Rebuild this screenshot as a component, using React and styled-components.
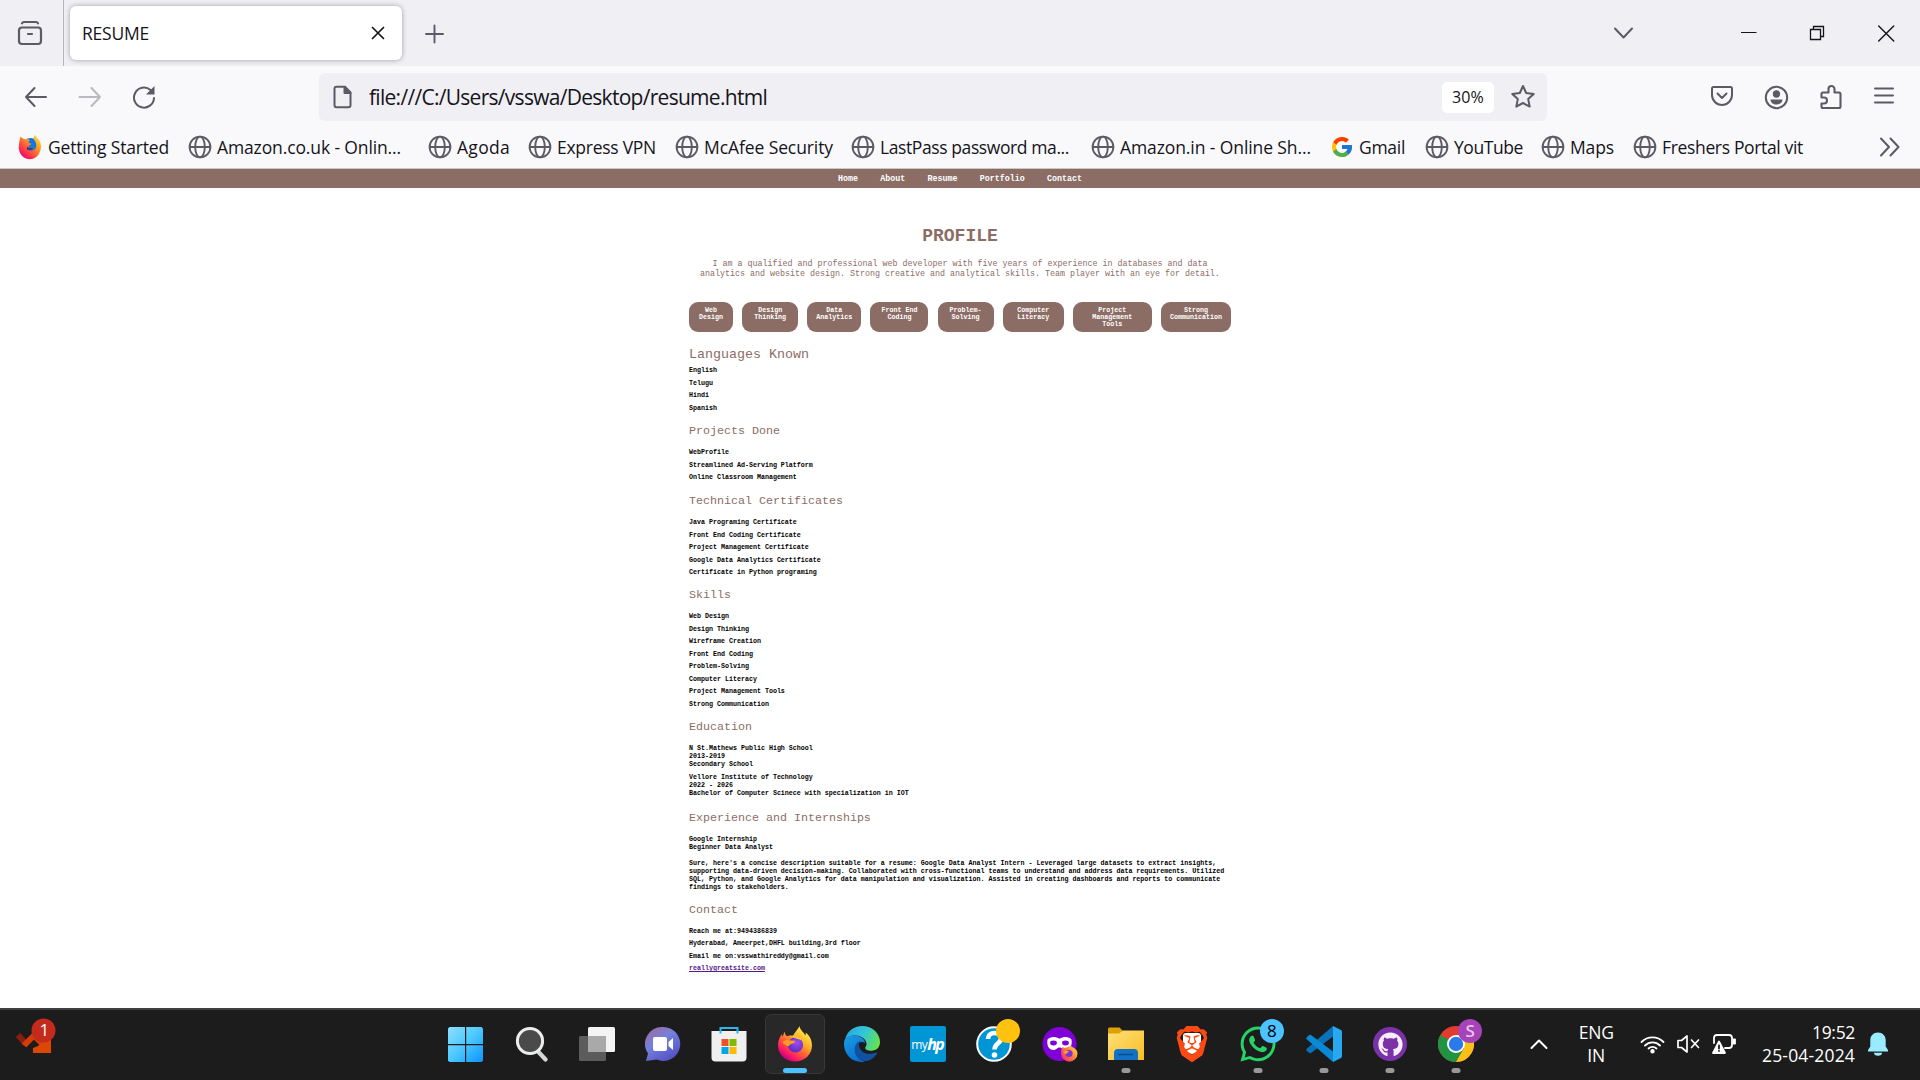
import React, { useLayoutEffect, useRef } from "react";
import styled, { createGlobalStyle } from "styled-components";
import { FaGithub, FaWhatsapp } from "react-icons/fa";
import { SiBrave } from "react-icons/si";
import { FcGoogle } from "react-icons/fc";

const UI = `"Open Sans", "Noto Sans", sans-serif`;
const MONO = `"Courier New", "Liberation Mono", monospace`;
const BROWN = "#8b6d66";
const GREY = "#5b5b66";

const Global = createGlobalStyle`
  * { box-sizing: border-box; }
  body { margin: 0; background: #fff; overflow: hidden; }
  svg { display: block; flex: none; }
`;

const Screen = styled.div`
  width: 1920px;
  height: 1080px;
  display: flex;
  flex-direction: column;
  background: #fff;
  font-family: ${UI};
  overflow: hidden;
`;

/* ---------- text that keeps a given measure ---------- */
const Measure = styled.span`
  display: block;
  flex: none;
  width: ${(p) => p.$w}px;
  font-size: ${(p) => p.$size}px;
  line-height: 1.3;
  color: ${(p) => p.$color || "#15141a"};
  white-space: pre;
`;

function Fit({ w, size, color, children }) {
  const ref = useRef(null);
  useLayoutEffect(() => {
    const el = ref.current;
    el.style.letterSpacing = "0px";
    const natural = el.getBoundingClientRect().width;
    el.style.letterSpacing = `${(w - natural) / children.length}px`;
  }, [w, size, children]);
  return (
    <Measure $w={w} $size={size} $color={color}>
      <span ref={ref}>{children}</span>
    </Measure>
  );
}

/* ---------- browser chrome ---------- */
const TabStrip = styled.div`
  height: 66px;
  flex: none;
  display: flex;
  align-items: center;
  background: #f0eff4;
`;
const FirefoxView = styled.div`
  width: 64px;
  height: 66px;
  display: flex;
  align-items: center;
  padding-left: 17px;
  border-right: 1px solid #b5b4ba;
`;
const Tab = styled.div`
  width: 332px;
  height: 54px;
  margin-left: 6px;
  padding: 0 17px 0 12px;
  display: flex;
  align-items: center;
  justify-content: space-between;
  background: #fff;
  border-radius: 6px;
  box-shadow: 0 0 5px rgba(0, 0, 0, 0.35);
`;
const NewTab = styled.div`
  margin-left: 22px;
  padding-top: 1px;
`;
const WindowControls = styled.div`
  margin-left: auto;
  padding-right: 24px;
  display: flex;
  align-items: center;
`;
const Control = styled.div`
  width: 20px;
  margin-left: ${(p) => p.$gap}px;
  display: flex;
  justify-content: center;
`;

const Toolbar = styled.div`
  height: 62px;
  flex: none;
  display: flex;
  align-items: center;
  background: #f9f9fb;
  padding: 0 25px 0 23px;
`;
const NavButtons = styled.div`
  width: 296px;
  display: flex;
  gap: 28px;
`;
const UrlBar = styled.div`
  width: 1228px;
  height: 48px;
  display: flex;
  align-items: center;
  background: #f0eff4;
  border-radius: 6px;
  padding: 0 11px 0 12px;
  gap: 16px;
`;
const UrlText = styled.div`
  padding-top: 2px;
`;
const ZoomLevel = styled.div`
  width: 52px;
  height: 31px;
  margin-left: auto;
  display: flex;
  align-items: center;
  justify-content: center;
  background: #fff;
  border-radius: 5px;
`;
const ToolIcons = styled.div`
  margin-left: auto;
  display: flex;
  align-items: center;
  gap: 30px;
`;

const Bookmarks = styled.div`
  height: 41px;
  flex: none;
  display: flex;
  align-items: center;
  background: #f9f9fb;
  padding: 0 19px 2px 18px;
  border-bottom: 1px solid #c5c9c8;
`;
const Bookmark = styled.div`
  width: ${(p) => p.$w}px;
  flex: none;
  display: flex;
  align-items: center;
  gap: ${(p) => (p.$wide ? 6 : 5)}px;
`;
const More = styled.div`
  margin-left: auto;
`;

/* ---------- page ---------- */
const Page = styled.main`
  flex: 1;
  min-height: 0;
  font-family: ${MONO};
  color: #000;
`;
const SiteNav = styled.nav`
  height: 19px;
  display: flex;
  justify-content: center;
  gap: 22.3px;
  padding-top: 2px;
  background: ${BROWN};
  color: #fff;
  font-weight: 700;
  font-size: 8.333px;
  line-height: 17px;
`;
const Sheet = styled.div`
  width: 542px;
  margin: 0 auto;
  padding-top: 38px;
`;
const Title = styled.h1`
  margin: 0;
  height: 20px;
  text-align: center;
  color: ${BROWN};
  font-size: 18px;
  line-height: 20px;
`;
const Intro = styled.p`
  margin: 13px 0 23px;
  text-align: center;
  color: ${BROWN};
  font-size: 8.333px;
  line-height: 10px;
  white-space: pre;
`;
const Pills = styled.div`
  display: flex;
  justify-content: space-between;
  height: 30px;
`;
const Pill = styled.div`
  width: ${(p) => p.$w}px;
  padding-top: 5px;
  border-radius: 9px;
  background: ${BROWN};
  color: #fff;
  font-weight: 700;
  font-size: 6.667px;
  line-height: 7.1px;
  text-align: center;
  white-space: pre;
`;
const Section = styled.section`
  margin-top: ${(p) => p.$top}px;
`;
const Heading = styled.h2`
  margin: 0 0 ${(p) => (p.$large ? 4 : 10)}px;
  color: ${BROWN};
  font-weight: 400;
  font-size: ${(p) => (p.$large ? 13.333 : 11.667)}px;
  line-height: 14px;
`;
const Item = styled.p`
  margin: 0 0 ${(p) => p.$after ?? 4.5}px;
  font-weight: 700;
  font-size: 6.667px;
  line-height: 8px;
  white-space: pre;
  &:last-child {
    margin-bottom: 0;
  }
`;
const Link = styled.a`
  color: #551a8b;
  text-decoration: underline;
`;

/* ---------- taskbar ---------- */
const Taskbar = styled.footer`
  height: 72px;
  flex: none;
  display: flex;
  border-top: 2px solid #3f3f3f;
  background: #1c1c1c;
  color: #fff;
`;
const Widgets = styled.div`
  width: 432px;
  padding: 7px 0 0 15px;
`;
const Apps = styled.div`
  display: flex;
`;
const AppSlot = styled.div`
  width: 66.08px;
  display: flex;
  justify-content: center;
  padding-top: 4px;
`;
const Tile = styled.div`
  position: relative;
  width: 60px;
  height: 60px;
  display: flex;
  align-items: center;
  justify-content: center;
  border-radius: 6px;
  border: 1px solid ${(p) => (p.$active ? "#373737" : "transparent")};
  background: ${(p) => (p.$active ? "#282828" : "transparent")};
`;
const Running = styled.span`
  position: absolute;
  bottom: 0;
  left: 50%;
  transform: translateX(-50%);
  width: ${(p) => (p.$active ? 24 : 9)}px;
  height: 5px;
  border-radius: 3px;
  background: ${(p) => (p.$active ? "#4cc2ff" : "#989898")};
`;
const Badge = styled.span`
  position: absolute;
  top: 4px;
  left: 31px;
  width: 24px;
  height: 24px;
  border-radius: 50%;
  display: flex;
  align-items: center;
  justify-content: center;
  font-size: 17px;
  font-weight: ${(p) => p.$weight || 400};
  line-height: 24px;
  background: ${(p) => p.$bg};
  color: ${(p) => p.$fg};
`;
const Round = styled.div`
  width: 34px;
  height: 34px;
  border-radius: 50%;
  display: flex;
  align-items: center;
  justify-content: center;
  background: ${(p) => p.$bg};
`;
const MyHp = styled.div`
  width: 36px;
  height: 36px;
  border-radius: 2px;
  background: #0096d6;
  display: flex;
  align-items: center;
  justify-content: center;
  font-size: 12px;
  letter-spacing: -0.5px;
  i {
    font-weight: 700;
    font-size: 16px;
    letter-spacing: -1.8px;
    padding-right: 1px;
  }
`;
const BraveMark = styled.div`
  position: relative;
  width: 36px;
  height: 36px;
  &::before {
    content: "";
    position: absolute;
    inset: 7px 9px 8px;
    background: #fff;
    border-radius: 3px 3px 9px 9px;
  }
  svg {
    position: relative;
  }
`;
const Tray = styled.div`
  flex: 1;
  display: flex;
  align-items: center;
  padding: 0 32px 2px 41px;
`;
const Lang = styled.div`
  width: 62px;
  margin-left: 17px;
  display: flex;
  flex-direction: column;
  align-items: center;
`;
const Status = styled.div`
  display: flex;
  align-items: center;
  gap: 10.5px;
  margin-left: 13px;
`;
const Clock = styled.div`
  margin-left: auto;
  display: flex;
  flex-direction: column;
  align-items: flex-end;
  margin-right: 13px;
`;

/* ---------- icons ---------- */
const Line = ({ w, h, vb, c = GREY, sw = 2, children }) => (
  <svg width={w} height={h} viewBox={vb || `0 0 ${w} ${h}`} fill="none" stroke={c} strokeWidth={sw} strokeLinecap="round" strokeLinejoin="round">
    {children}
  </svg>
);
const Globe = () => (
  <Line w={24} h={24} sw={1.9}>
    <circle cx="12" cy="12" r="10.4" />
    <ellipse cx="12" cy="12" rx="4.8" ry="10.4" />
    <path d="M2 12h20" />
  </Line>
);
const OldFirefox = () => (
  <svg width="24" height="26" viewBox="0 0 24 26">
    <defs>
      <linearGradient id="of" x1="1" y1="0" x2=".2" y2="1">
        <stop offset="0" stopColor="#fff44f" /><stop offset=".4" stopColor="#ff9a1e" /><stop offset=".8" stopColor="#ff2b4b" /><stop offset="1" stopColor="#e4007f" />
      </linearGradient>
    </defs>
    <circle cx="12.5" cy="12.5" r="8.5" fill="#0a78e8" />
    <path d="M2.500 2.500C4 4 5 5 7.500 5.200c2-.5 3.500.2 4.500.8-1 .7-1.500 1.500-1.300 2.500 1 .8 2.500.5 2.600 1.500-.3 1.200-2.600 1.500-2.900 2.700 2 2 4.600.4 5.800 1.100-1 1.500-2.700 2.600-5 2.700 3 1.200 6.500-.5 7-4 .4-3-.7-5.500-2.700-7.500C15.500 3.500 16 2 17.500.7 18 3.500 20 4.500 21.500 6.500c1 1.700 1.800 4 1.600 6.500C22.500 20 18 25.300 12 25.300 5.500 25.300.8 20 .8 13.500.8 9 1.800 6 2.500 2.500z" fill="url(#of)" />
    <path d="M9.500 12.800c2 2 5 .6 6.300 1-1.200 2-3.800 2.800-5.800 2.300-1.500-.5-1.500-2.200-.5-3.300z" fill="#213c9a" />
  </svg>
);
const FirefoxLogo = ({ s = 36 }) => (
  <svg width={s} height={s} viewBox="0 0 36 36">
    <defs>
      <linearGradient id="ff1" x1=".85" y1=".1" x2=".25" y2=".95">
        <stop offset="0" stopColor="#fff44f" /><stop offset=".35" stopColor="#ffb02a" /><stop offset=".62" stopColor="#ff5b36" /><stop offset=".85" stopColor="#f8176a" /><stop offset="1" stopColor="#c60084" />
      </linearGradient>
      <radialGradient id="ff2" cx=".6" cy=".35" r=".7">
        <stop offset="0" stopColor="#a04bef" /><stop offset="1" stopColor="#5a2bbf" />
      </radialGradient>
    </defs>
    <path d="M22.500 0c.5 4 4 6 6 9.500.3-1 .4-2 .2-3C32.500 9.500 35 14 35 19.500 35 28.500 27.500 35.500 18 35.500S1 28.500 1 19.500C1 14 3 10.500 5 8l.5 3L7.500 5.500c.3 2 1.200 3.500 2.500 4.700 2.500-1.200 4.500-.6 6-.1C17.500 6 20 5 22.500 0z" fill="url(#ff1)" />
    <circle cx="18.500" cy="18.800" r="7.600" fill="url(#ff2)" />
    <path d="M5.500 16c2.500-2.300 5.500-2.500 8-1.500l4.500.3c.8 1.500-1 2.700-3.800 3.200-1.600.4-2 2-2.800 2.200C8.500 19 6 18.500 5.500 16z" fill="#ff9a23" />
    <path d="M12.500 10c5-1.500 12 0 14.500 6-2-2-4-2.800-6-2.700-2.500-1.500-5-1.300-8.500-3.300z" fill="#ffc02c" />
  </svg>
);
const WindowsLogo = () => (
  <svg width="35" height="35" viewBox="0 0 35 35">
    <defs>
      <linearGradient id="wn" gradientUnits="userSpaceOnUse" x1="0" y1="0" x2="35" y2="35">
        <stop offset="0" stopColor="#8be0ff" /><stop offset=".5" stopColor="#4cc8ff" /><stop offset="1" stopColor="#0a93fb" />
      </linearGradient>
    </defs>
    <g fill="url(#wn)">
      <path d="M1.500 0H17v17H0V1.500z" /><path d="M18.200 0h15.300L35 1.500V17H18.200z" />
      <path d="M0 18.200h17V35H1.500L0 33.500z" /><path d="M18.200 18.200H35v15.300L33.500 35H18.200z" />
    </g>
  </svg>
);
const SearchIcon = () => (
  <svg width="34" height="36" viewBox="-1 0 34 36">
    <path d="M23.500 26l7 7.500" stroke="#d5d7da" strokeWidth="4.200" strokeLinecap="round" />
    <circle cx="15" cy="15" r="12.600" fill="#4a4a4b" stroke="#eceded" strokeWidth="3" />
  </svg>
);
const TaskView = () => (
  <svg width="36" height="36" viewBox="0 0 36 36">
    <rect x="9" y="1" width="27" height="25" rx="1.500" fill="#f4f4f4" />
    <rect x="0" y="10" width="27" height="25" rx="1.500" fill="#5c5c5c" />
    <path d="M9 10h18v16H9z" fill="#a9a9a9" />
  </svg>
);
const Chat = () => (
  <svg width="36" height="36" viewBox="0 0 36 36">
    <defs>
      <linearGradient id="ct" x1=".1" y1=".1" x2=".7" y2="1">
        <stop offset="0" stopColor="#9a6fa8" /><stop offset=".4" stopColor="#7481dc" /><stop offset="1" stopColor="#5450c4" />
      </linearGradient>
    </defs>
    <path d="M18 1a17 17 0 1 1-6.500 32.600L1 35l2-7.500A17 17 0 0 1 18 1z" fill="url(#ct)" />
    <rect x="8" y="11" width="14" height="14" rx="2" fill="#fff" />
    <path d="M23.500 16l4.500-4v12l-4.500-4z" fill="#fff" />
  </svg>
);
const Store = () => (
  <svg width="36" height="36" viewBox="0 0 36 36">
    <path d="M0.500 5h35v26.500a4 4 0 0 1-4 4h-27a4 4 0 0 1-4-4z" fill="#f0f0f0" />
    <path d="M9.500 7.500V2h17v5.500" fill="none" stroke="#2bb5ef" strokeWidth="2" />
    <path d="M10.500 13h7v7h-7z" fill="#f25022" /><path d="M18.500 13h7v7h-7z" fill="#7fba00" />
    <path d="M10.500 21h7v7h-7z" fill="#00a4ef" /><path d="M18.500 21h7v7h-7z" fill="#ffb900" />
  </svg>
);
const Edge = () => (
  <svg width="36" height="36" viewBox="0 0 36 36">
    <defs>
      <linearGradient id="eg" x1="0" y1=".3" x2="1" y2=".6">
        <stop offset="0" stopColor="#2aa8e0" /><stop offset=".5" stopColor="#33c5d8" /><stop offset="1" stopColor="#66e34b" />
      </linearGradient>
      <linearGradient id="eb" x1="0" y1="0" x2=".6" y2="1"><stop offset="0" stopColor="#1b9de2" /><stop offset="1" stopColor="#0670cf" /></linearGradient>
    </defs>
    <path d="M1 13C3.500 5 10 0 18 0c10.500 0 18 7.500 18 16 0 5.500-4 8.700-8.500 8.700-4 0-6.300-1.500-6.300-2.800 0-1 1.300-1.600 1.300-4C22.500 14 18 9.500 11.500 9.500 6.500 9.500 2.500 11.500 1 13z" fill="url(#eg)" />
    <path d="M1 13c2.500-3 7-4 11-3.500 5 .6 9 4 9 7.500-5-3-11 1-10 8 .6 5 5 9.500 9.500 10.700C9 37.500 0 29 0 18c0-2 .3-3.500 1-5z" fill="url(#eb)" />
    <path d="M16.500 14.500c-4 1.500-6.500 6-5.500 11 1.200 6 7 10.500 12 9.500 4-1 8-4 10-7.500.5-1-.5-1.300-1.300-.9-8 4-17-1-16.700-8.100.1-1.800.8-3.200 1.500-4z" fill="#1250a0" />
  </svg>
);
const Help = () => (
  <svg width="36" height="36" viewBox="0 0 36 36">
    <circle cx="18" cy="18" r="16.800" fill="#0096d6" stroke="#fff" strokeWidth="2" />
    <path d="M12 13c0-4 3-6 6.500-6s6.500 2.300 6.500 5.500c0 5-6.500 4.500-6.500 11" fill="none" stroke="#fff" strokeWidth="4.600" />
    <circle cx="18.500" cy="29" r="2.800" fill="#fff" />
  </svg>
);
const PrivateFirefox = () => (
  <svg width="36" height="36" viewBox="0 0 36 36">
    <defs>
      <linearGradient id="pf" x1="1" y1=".1" x2=".1" y2=".9"><stop offset="0" stopColor="#ffe04a" /><stop offset=".45" stopColor="#ff8a3c" /><stop offset="1" stopColor="#f0296e" /></linearGradient>
    </defs>
    <circle cx="17.500" cy="18" r="17" fill="#8000d7" />
    <path d="M5.500 13.500c2-3 8-3.500 12-.8 4-2.700 10-2.200 12 .8 1 6-1.500 10.500-6 10.500-3 0-3.500-2.500-6-2.500s-3 2.500-6 2.500c-4.500 0-7-4.500-6-10.500z" fill="#fff" />
    <ellipse cx="11.500" cy="17" rx="3.400" ry="2.400" fill="#8000d7" /><ellipse cx="23.500" cy="17" rx="3.400" ry="2.400" fill="#8000d7" />
    <path d="M28.500 19c1 3 7 3 7 8.500a8.200 8.200 0 1 1-16.400 0c0-3 .5-5 1.500-6.500l2 1c2-1 5-.5 5.900-3z" fill="url(#pf)" />
    <circle cx="27" cy="27.500" r="3.600" fill="#7a35d0" />
    <path d="M21.500 25.500c2-1.200 3.500-.6 5.500-.3-.3 1.800-2.500 1.200-3 2.800-1.500 0-2.500-1-2.500-2.500z" fill="#ff9a32" />
  </svg>
);
const Folder = () => (
  <svg width="36" height="36" viewBox="0 0 36 36">
    <defs><linearGradient id="fo" x1="0" y1="0" x2="1" y2="1"><stop offset="0" stopColor="#ffe07c" /><stop offset="1" stopColor="#f9bd20" /></linearGradient></defs>
    <path d="M0 3a1.500 1.500 0 0 1 1.500-1.500h10L15 5v5H0z" fill="#dfa004" />
    <path d="M0 7.500h11l4-3h21V34H0z" fill="url(#fo)" />
    <path d="M6 34v-7a4 4 0 0 1 4-4h16a4 4 0 0 1 4 4v7z" fill="#1172c8" />
    <path d="M10.500 28.500h14.500" stroke="#0b4a8a" strokeWidth="1.500" />
  </svg>
);
const VsCode = () => (
  <svg width="36" height="36" viewBox="0 0 36 36">
    <path d="M27 0L1 22.500c-1 .9-1 1.700 0 2.600l2 1.600c.8.600 1.600.6 2.300.1L27 10.500z" fill="#0a72b8" />
    <path d="M27 36L1 13.500c-1-.9-1-1.700 0-2.600l2-1.600c.8-.6 1.600-.6 2.300-.1L27 25.500z" fill="#0a8ad4" />
    <path d="M27 0l7.500 3.800c1 .4 1.500 1.200 1.500 2.200v24c0 1-.5 1.800-1.500 2.200L27 36z" fill="#29a8f2" />
  </svg>
);
const Chrome = () => (
  <svg width="36" height="36" viewBox="0 0 36 36">
    <circle cx="18" cy="18" r="18" fill="#e33b2e" />
    <path d="M2.400 9A18 18 0 0 0 18 36l7.800-13.500L18 18z" fill="#229342" />
    <path d="M18 36A18 18 0 0 0 33.600 9H18l7.800 13.500z" fill="#fbc116" />
    <circle cx="18" cy="18" r="9" fill="#fff" /><circle cx="18" cy="18" r="7.200" fill="#2a7bea" />
  </svg>
);
const Brave = () => (
  <BraveMark><SiBrave size={36} color="#fb4a14" /></BraveMark>
);

const bookmarks = [
  ["Getting Started", 170, 121, "firefox"],
  ["Amazon.co.uk - Onlin...", 240, 184],
  ["Agoda", 100, 53],
  ["Express VPN", 147, 99],
  ["McAfee Security", 176, 129],
  ["LastPass password ma...", 240, 189],
  ["Amazon.in - Online Sh...", 239, 191],
  ["Gmail", 95, 46, "google"],
  ["YouTube", 116, 69],
  ["Maps", 92, 44],
  ["Freshers Portal vit", 180, 141],
];

const pills = [
  ["Web\nDesign", 44], ["Design\nThinking", 56], ["Data\nAnalytics", 54], ["Front End\nCoding", 58],
  ["Problem-\nSolving", 56], ["Computer\nLiteracy", 61], ["Project\nManagement\nTools", 79], ["Strong\nCommunication", 70],
];

const sections = [
  { title: "Languages Known", top: 16, large: true, items: ["English", "Telugu", "Hindi", "Spanish"] },
  { title: "Projects Done", top: 12.5, items: ["WebProfile", "Streamlined Ad-Serving Platform", "Online Classroom Management"] },
  { title: "Technical Certificates", top: 13, items: ["Java Programing Certificate", "Front End Coding Certificate", "Project Management Certificate", "Google Data Analytics Certificate", "Certificate in Python programing"] },
  { title: "Skills", top: 12, items: ["Web Design", "Design Thinking", "Wireframe Creation", "Front End Coding", "Problem-Solving", "Computer Literacy", "Project Management Tools", "Strong Communication"] },
  { title: "Education", top: 12.5, after: 5, items: ["N St.Mathews Public High School\n2013-2019\nSecondary School", "Vellore Institute of Technology\n2022 - 2026\nBachelor of Computer Scinece with specialization in IOT"] },
  { title: "Experience and Internships", top: 13.5, after: 8, items: ["Google Internship\nBeginner Data Analyst", "Sure, here's a concise description suitable for a resume: Google Data Analyst Intern - Leveraged large datasets to extract insights,\nsupporting data-driven decision-making. Collaborated with cross-functional teams to understand and address data requirements. Utilized\nSQL, Python, and Google Analytics for data manipulation and visualization. Assisted in creating dashboards and reports to communicate\nfindings to stakeholders."] },
  { title: "Contact", top: 12, link: "reallygreatsite.com", items: ["Reach me at:9494386839", "Hyderabad, Ameerpet,DHFL building,3rd floor", "Email me on:vsswathireddy@gmail.com"] },
];

const apps = [
  { icon: <WindowsLogo /> },
  { icon: <SearchIcon /> },
  { icon: <TaskView /> },
  { icon: <Chat /> },
  { icon: <Store /> },
  { icon: <FirefoxLogo />, active: true },
  { icon: <Edge /> },
  { icon: <MyHp>my<i>hp</i></MyHp> },
  { icon: <Help />, badge: { text: "", bg: "#ffc20e", fg: "#000" } },
  { icon: <PrivateFirefox /> },
  { icon: <Folder />, running: true },
  { icon: <Brave /> },
  { icon: <FaWhatsapp size={40} color="#25d366" />, running: true, badge: { text: "8", bg: "#4cc2ff", fg: "#000" } },
  { icon: <VsCode />, running: true },
  { icon: <Round $bg="#7b32a8"><FaGithub size={25} color="#f4eff8" /></Round>, running: true },
  { icon: <Chrome />, running: true, badge: { text: "S", bg: "#a643b8", fg: "#e6c6ee", weight: 600 } },
];

export default function App() {
  return (
    <Screen>
      <Global />
      <TabStrip>
        <FirefoxView>
          <Line w={26} h={26} sw={2.2}>
            <rect x="2" y="7.500" width="22" height="16.500" rx="3" />
            <path d="M5 3.300Q5.500 2 7 2h12q1.500 0 2 1.300M11 14h4" />
          </Line>
        </FirefoxView>
        <Tab>
          <Fit w={67} size={17.5}>RESUME</Fit>
          <Line w={14} h={14} sw={1.7} c="#15141a"><path d="M1.500 1.500l11 11M12.500 1.500l-11 11" /></Line>
        </Tab>
        <NewTab>
          <Line w={20} h={20} sw={1.9}><path d="M10.500 1.500v17M2 10h17" /></Line>
        </NewTab>
        <WindowControls>
          <Control $gap={0}><Line w={20} h={12}><path d="M1 1.500L9.500 10.500l8.500-9" /></Line></Control>
          <Control $gap={105}><Line w={16} h={2} sw={1.1} c="#15141a"><path d="M0 .5h15" /></Line></Control>
          <Control $gap={48}>
            <Line w={16} h={16} sw={1.3} c="#15141a"><path d="M1.500 4.500h10v10h-10zM4.500 4.500v-3h10v10h-3" strokeLinejoin="miter" /></Line>
          </Control>
          <Control $gap={49}><Line w={17} h={17} sw={1.4} c="#15141a"><path d="M.7 1l15 15M15.700 1L.7 16" /></Line></Control>
        </WindowControls>
      </TabStrip>

      <Toolbar>
        <NavButtons>
          <Line w={26} h={26}><path d="M23 13H3M11.500 4L3 13l8.500 9" /></Line>
          <Line w={26} h={26} c="#b9b9c0"><path d="M2.500 13H23M14.500 4l8.500 9-8.500 9" /></Line>
          <Line w={26} h={26}>
            <path d="M23 14A10 10 0 1 1 19.500 6" /><path d="M23.500 2v8.500H15z" fill={GREY} stroke="none" />
          </Line>
        </NavButtons>
        <UrlBar>
          <Line w={22} h={24}>
            <path d="M5.500 1.800h8.500l5.500 5.700v12.700q0 2-2 2h-12q-2 0-2-2V3.800q0-2 2-2z" />
            <path d="M13.500 2v6h6z" fill={GREY} />
          </Line>
          <UrlText><Fit w={398} size={21}>file:///C:/Users/vsswa/Desktop/resume.html</Fit></UrlText>
          <ZoomLevel><Fit w={32} size={16}>30%</Fit></ZoomLevel>
          <Line w={26} h={26}>
            <path d="M13 2l3.200 7 7.500.9-5.500 5.200 1.500 7.500L13 19l-6.700 3.600 1.500-7.500L2.300 9.900 9.800 9z" />
          </Line>
        </UrlBar>
        <ToolIcons>
          <Line w={24} h={24}><path d="M3.500 2h17Q22 2 22 3.500V10a10 10 0 0 1-20 0V3.500Q2 2 3.500 2zM7.500 8.500l4.500 4.500 4.500-4.500" /></Line>
          <Line w={25} h={25}>
            <circle cx="12.500" cy="12.500" r="10.700" />
            <circle cx="12.500" cy="9" r="3.700" fill={GREY} stroke="none" />
            <path d="M6.500 14.500h12c0 3-2.500 5-6 5s-6-2-6-5z" fill={GREY} stroke="none" />
          </Line>
          <Line w={24} h={26} sw={2.1}>
            <path d="M4 24h16q1.500 0 1.500-1.500V10Q21.500 8.500 20 8.500h-4.500V5a3 3 0 0 0-6 0v3.500H4Q2.500 8.500 2.500 10v3.500H5a3 3 0 0 1 0 6H2.500v3Q2.500 24 4 24z" />
          </Line>
          <Line w={22} h={20}><path d="M2 1.500h18M2 8.500h18M2 15.500h18" /></Line>
        </ToolIcons>
      </Toolbar>

      <Bookmarks>
        {bookmarks.map(([label, slot, w, kind]) => (
          <Bookmark key={label} $w={slot} $wide={kind === "firefox"}>
            {kind === "firefox" ? <OldFirefox /> : kind === "google" ? <FcGoogle size={24} /> : <Globe />}
            <Fit w={w} size={17.5}>{label}</Fit>
          </Bookmark>
        ))}
        <More><Line w={22} h={20}><path d="M2 1.500l8 8.500-8 8.500M11.500 1.500l8 8.500-8 8.500" /></Line></More>
      </Bookmarks>

      <Page>
        <SiteNav>
          <span>Home</span><span>About</span><span>Resume</span><span>Portfolio</span><span>Contact</span>
        </SiteNav>
        <Sheet>
          <Title>PROFILE</Title>
          <Intro>{"I am a qualified and professional web developer with five years of experience in databases and data\nanalytics and website design. Strong creative and analytical skills. Team player with an eye for detail."}</Intro>
          <Pills>
            {pills.map(([t, w]) => <Pill key={t} $w={w}>{t}</Pill>)}
          </Pills>
          {sections.map((s) => (
            <Section key={s.title} $top={s.top}>
              <Heading $large={s.large}>{s.title}</Heading>
              {s.items.map((t) => <Item key={t} $after={s.after}>{t}</Item>)}
              {s.link && <Item><Link>{s.link}</Link></Item>}
            </Section>
          ))}
        </Sheet>
      </Page>

      <Taskbar>
        <Widgets>
          <svg width="42" height="38" viewBox="0 0 42 38">
            <path d="M3 18l8 9" stroke="#8c1d12" strokeWidth="6" />
            <path d="M9 28.500l10-10 9 9" stroke="#d43c08" strokeWidth="6" fill="none" />
            <path d="M36 17v19H18v-5l5-2 7-7z" fill="#dd4703" />
            <circle cx="28.500" cy="13.500" r="12" fill="#c42b1c" />
            <text x="29.300" y="19.300" fill="#fff" fontFamily="Open Sans, sans-serif" fontSize="17" textAnchor="middle">1</text>
          </svg>
        </Widgets>
        <Apps>
          {apps.map((a, i) => (
            <AppSlot key={i}>
              <Tile $active={a.active}>
                {a.icon}
                {(a.running || a.active) && <Running $active={a.active} />}
                {a.badge && <Badge $bg={a.badge.bg} $fg={a.badge.fg} $weight={a.badge.weight}>{a.badge.text}</Badge>}
              </Tile>
            </AppSlot>
          ))}
        </Apps>
        <Tray>
          <Line w={18} h={12} c="#fff"><path d="M1.500 10L9 2.500l7.500 7.500" /></Line>
          <Lang>
            <Fit w={35} size={17.5} color="#fff">ENG</Fit>
            <Fit w={18} size={17.5} color="#fff">IN</Fit>
          </Lang>
          <Status>
            <Line w={25} h={20} c="#fff" sw={1.8}>
              <path d="M1.500 8a15.500 15.500 0 0 1 22 0M5 11.500a10.600 10.600 0 0 1 15 0M8.500 14.500a5.800 5.800 0 0 1 8 0" />
              <circle cx="12.500" cy="17.300" r="1.300" fill="#fff" />
            </Line>
            <Line w={25} h={20} c="#fff" sw={1.7}>
              <path d="M2 6.500h3.500L11 2v16l-5.500-4.500H2zM15.500 6l7 7.500M22.500 6l-7 7.500" />
            </Line>
            <Line w={26} h={22} c="#fff" sw={1.8}>
              <path d="M3 10V5q0-3 3-3h12q3 0 3 3v7q0 3-3 3h-4" />
              <path d="M22.500 6.500h1.500v4h-1.500z" fill="#fff" />
              <path d="M8 8.500L14 20H2z" fill="#fff" /><path d="M8 12.500v3M8 17.800v.1" stroke="#1c1c1c" />
            </Line>
          </Status>
          <Clock>
            <Fit w={43} size={17.5} color="#fff">19:52</Fit>
            <Fit w={93} size={17.5} color="#fff">25-04-2024</Fit>
          </Clock>
          <svg width="20" height="24" viewBox="0 0 20 24">
            <path d="M10 .5c4.500 0 7.700 3.200 7.700 7.500v6.500L20 18v1.500H0V18l2.300-3.500V8C2.300 3.700 5.500.5 10 .5zM6 20.800h8a4 3 0 0 1-8 0z" fill="#99ebff" />
          </svg>
        </Tray>
      </Taskbar>
    </Screen>
  );
}
